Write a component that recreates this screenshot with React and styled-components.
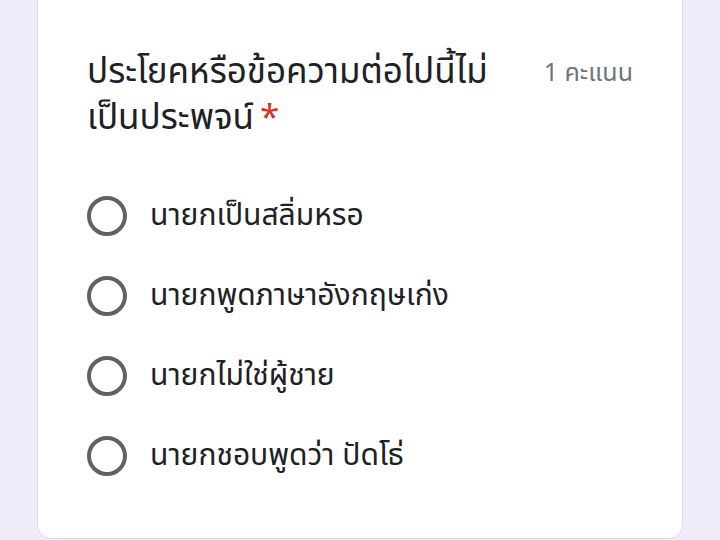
import styled, { createGlobalStyle } from "styled-components";

const GlobalStyle = createGlobalStyle`
  html, body {
    margin: 0;
    padding: 0;
    background: #f0ebf8;
    font-family: "Noto Sans Thai", Roboto, "Noto Sans", sans-serif;
  }
`;

const Page = styled.div`
  width: 720px;
  height: 540px;
  overflow: hidden;
  padding: 0 37px;
  box-sizing: border-box;
`;

const Card = styled.div`
  margin-top: -14px;
  height: 553px;
  box-sizing: border-box;
  background: #fff;
  border: 1.5px solid #dadce0;
  border-radius: 14px;
  padding: 63px 49px 0 49px;
`;

const Header = styled.div`
  display: flex;
  justify-content: space-between;
  align-items: flex-start;
  gap: 20px;
`;

const Title = styled.div`
  font-size: 35px;
  line-height: 46px;
  color: #202124;
  white-space: nowrap;
`;

const Required = styled.span`
  color: #d93025;
  margin-left: 6px;
`;

const Points = styled.div`
  font-size: 25px;
  line-height: 46px;
  color: #70757a;
  white-space: nowrap;
`;

const Options = styled.div`
  display: flex;
  flex-direction: column;
  margin-top: 34px;
`;

const Option = styled.label`
  display: flex;
  align-items: center;
  height: 80px;
  gap: 23px;
`;

const Radio = styled.span`
  width: 40px;
  height: 40px;
  box-sizing: border-box;
  border: 4px solid #5f6368;
  border-radius: 50%;
  flex-shrink: 0;
`;

const OptionText = styled.span`
  font-size: 30px;
  color: #202124;
`;

const options = [
  "นายกเป็นสลิ่มหรอ",
  "นายกพูดภาษาอังกฤษเก่ง",
  "นายกไม่ใช่ผู้ชาย",
  "นายกชอบพูดว่า ปัดโธ่",
];

export default function App() {
  return (
    <>
      <GlobalStyle />
      <Page>
        <Card>
          <Header>
            <Title>
              ประโยคหรือข้อความต่อไปนี้ไม่
              <br />
              เป็นประพจน์<Required>*</Required>
            </Title>
            <Points>1 คะแนน</Points>
          </Header>
          <Options>
            {options.map((o) => (
              <Option key={o}>
                <Radio />
                <OptionText>{o}</OptionText>
              </Option>
            ))}
          </Options>
        </Card>
      </Page>
    </>
  );
}
